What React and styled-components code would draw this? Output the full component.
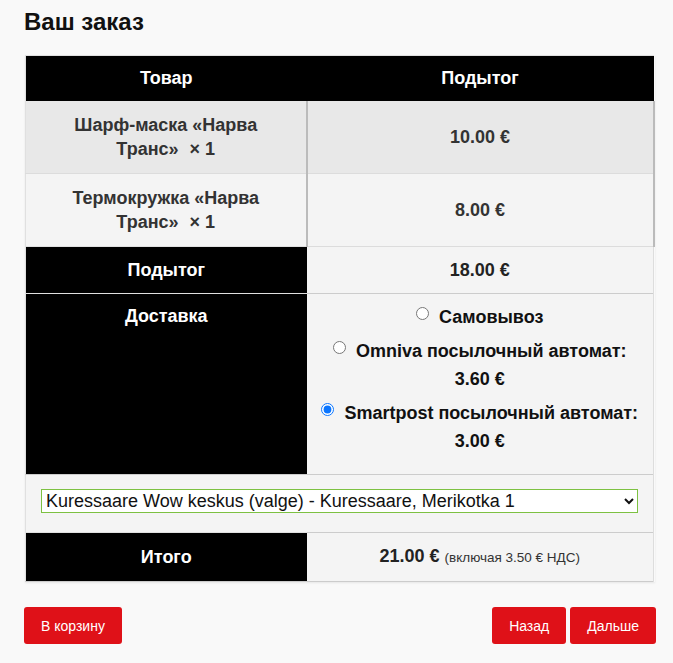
import React, { useState } from "react";
import styled, { createGlobalStyle } from "styled-components";

const GlobalStyle = createGlobalStyle`
  body {
    margin: 0;
    background: #f9f9f9;
    font-family: "Liberation Sans", Arial, sans-serif;
    color: #333;
  }
`;

const S = {
  Wrapper: styled.div`
    padding: 8px 17px 20px 24px;
  `,
  Title: styled.h2`
    margin: 0 0 19px 0;
    font-size: 24px;
    line-height: 28px;
    font-weight: bold;
    color: #111;
  `,
  Table: styled.table`
    width: 628px;
    margin: 0 0 0 1px;
    border-collapse: collapse;
    table-layout: fixed;
    font-size: 18px;
    line-height: 24px;
    border-left: 1px solid #e0e0e0;
    border-bottom: 1px solid #ccc;
    box-shadow: 0 1px 2px rgba(0, 0, 0, 0.08);
  `,
  Col: styled.col`
    width: ${(p) => p.$w};
  `,
  HeadCell: styled.th`
    background: #000;
    color: #fff;
    font-weight: bold;
    text-align: center;
    padding: 10px 12px 11px;
    vertical-align: ${(p) => (p.$top ? "top" : "middle")};
    border-top: 1px solid #e0e0e0;
  `,
  ProductRow: styled.tr`
    background: ${(p) => (p.$odd ? "#e8e8e8" : "#f4f4f4")};
    border-bottom: 1px solid #dcdcdc;
  `,
  NameCell: styled.td`
    padding: 12px 22px;
    text-align: center;
    font-weight: bold;
    color: #333;
    border-right: 2px solid #bbb;
  `,
  Qty: styled.span`
    margin-left: 6px;
  `,
  PriceCell: styled.td`
    padding: 12px;
    text-align: center;
    font-weight: bold;
    color: #333;
    border-right: 2px solid #bbb;
  `,
  FootRow: styled.tr`
    border-bottom: 1px solid #ccc;
  `,
  ValueCell: styled.td`
    background: #f4f4f4;
    padding: ${(p) => p.$pad || "11px 12px"};
    text-align: center;
    font-weight: bold;
    color: #222;
    border-right: 1px solid #ddd;
  `,
  Methods: styled.ul`
    list-style: none;
    margin: 0;
    padding: 0;
    line-height: 28px;
    color: #111;
  `,
  Method: styled.li`
    margin-bottom: 6px;
  `,
  Radio: styled.input`
    margin: 0 10px 0 0;
    width: 13px;
    height: 13px;
    vertical-align: 3px;
    accent-color: #0a75ff;
  `,
  SelectCell: styled.td`
    background: #f4f4f4;
    padding: 14px 15px 19px;
    border-right: 1px solid #ddd;
  `,
  Select: styled.select`
    width: 100%;
    height: 24px;
    font-family: "Liberation Sans", Arial, sans-serif;
    font-size: 18px;
    color: #111;
    background: #fff;
    border: 1px solid #7dc142;
    border-radius: 0;
    padding: 0;
  `,
  Tax: styled.small`
    font-weight: normal;
    font-size: 13.5px;
    color: #333;
  `,
  Actions: styled.div`
    display: flex;
    align-items: center;
    gap: 4px;
    margin-top: 25px;
  `,
  Spacer: styled.div`
    flex: 1;
  `,
  Button: styled.button`
    height: 37px;
    padding: 0 17px;
    background: #df1118;
    color: #fff;
    border: none;
    border-radius: 3px;
    font-family: "Liberation Sans", Arial, sans-serif;
    font-size: 14px;
    cursor: pointer;
  `,
};

const items = [
  { name: "Шарф-маска «Нарва Транс»", qty: 1, total: "10.00 €" },
  { name: "Термокружка «Нарва Транс»", qty: 1, total: "8.00 €" },
];

const methods = [
  { id: "pickup", label: "Самовывоз" },
  { id: "omniva", label: "Omniva посылочный автомат:", price: "3.60 €" },
  { id: "smartpost", label: "Smartpost посылочный автомат:", price: "3.00 €" },
];

const App = () => {
  const [method, setMethod] = useState("smartpost");

  return (
    <>
      <GlobalStyle />
      <S.Wrapper>
        <S.Title>Ваш заказ</S.Title>
        <S.Table>
          <colgroup>
            <S.Col $w="281px" />
            <S.Col $w="347px" />
          </colgroup>
          <thead>
            <tr>
              <S.HeadCell>Товар</S.HeadCell>
              <S.HeadCell>Подытог</S.HeadCell>
            </tr>
          </thead>
          <tbody>
            {items.map((item, i) => (
              <S.ProductRow key={item.name} $odd={i % 2 === 0}>
                <S.NameCell>
                  {item.name} <S.Qty>×&nbsp;{item.qty}</S.Qty>
                </S.NameCell>
                <S.PriceCell>{item.total}</S.PriceCell>
              </S.ProductRow>
            ))}
          </tbody>
          <tfoot>
            <S.FootRow>
              <S.HeadCell>Подытог</S.HeadCell>
              <S.ValueCell>18.00 €</S.ValueCell>
            </S.FootRow>
            <S.FootRow>
              <S.HeadCell $top>Доставка</S.HeadCell>
              <S.ValueCell $pad="9px 12px 13px">
                <S.Methods>
                  {methods.map((m) => (
                    <S.Method key={m.id}>
                      <S.Radio
                        type="radio"
                        name="shipping"
                        checked={method === m.id}
                        onChange={() => setMethod(m.id)}
                      />
                      {m.label}
                      {m.price && (
                        <>
                          <br />
                          {m.price}
                        </>
                      )}
                    </S.Method>
                  ))}
                </S.Methods>
              </S.ValueCell>
            </S.FootRow>
            <S.FootRow>
              <S.SelectCell colSpan={2}>
                <S.Select defaultValue="wow">
                  <option value="wow">
                    Kuressaare Wow keskus (valge) - Kuressaare, Merikotka 1
                  </option>
                </S.Select>
              </S.SelectCell>
            </S.FootRow>
            <S.FootRow>
              <S.HeadCell>Итого</S.HeadCell>
              <S.ValueCell>
                21.00 € <S.Tax>(включая 3.50 € НДС)</S.Tax>
              </S.ValueCell>
            </S.FootRow>
          </tfoot>
        </S.Table>
        <S.Actions>
          <S.Button>В корзину</S.Button>
          <S.Spacer />
          <S.Button>Назад</S.Button>
          <S.Button>Дальше</S.Button>
        </S.Actions>
      </S.Wrapper>
    </>
  );
};

export default App;
